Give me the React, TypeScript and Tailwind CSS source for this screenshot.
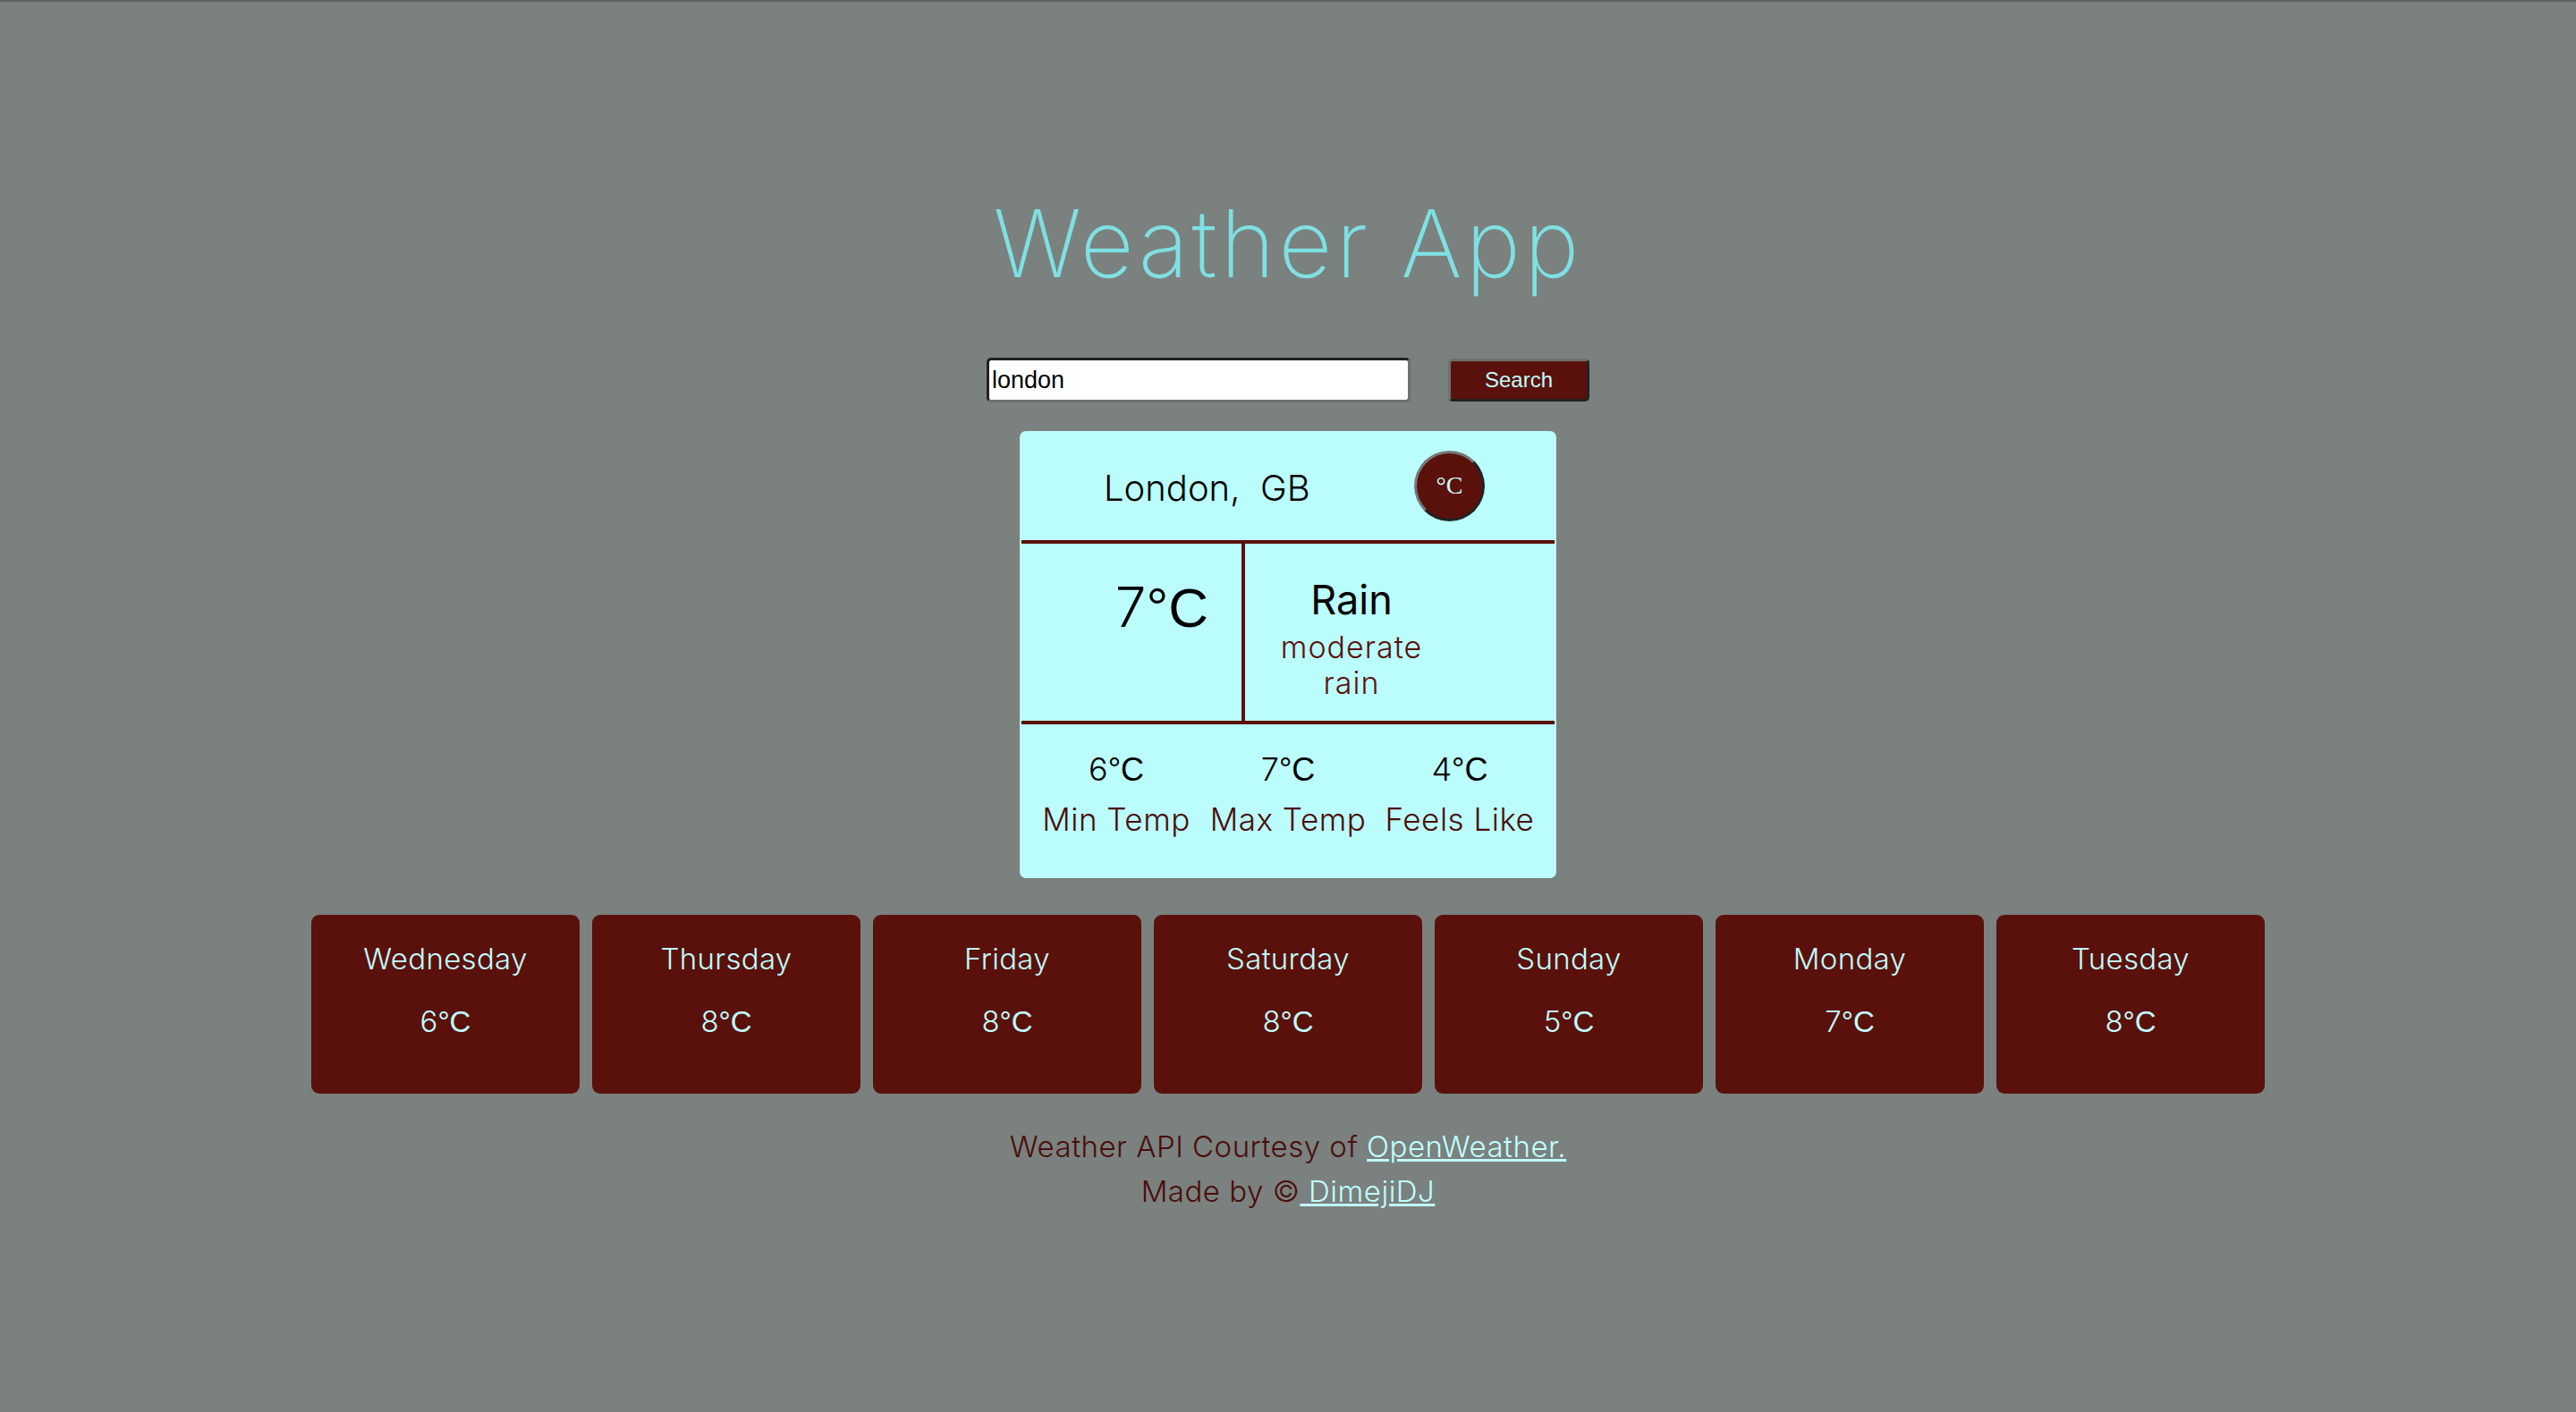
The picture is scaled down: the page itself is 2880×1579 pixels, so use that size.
import React from 'react'

const forecast: [string, number][] = [
  ['Wednesday', 6],
  ['Thursday', 8],
  ['Friday', 8],
  ['Saturday', 8],
  ['Sunday', 5],
  ['Monday', 7],
  ['Tuesday', 8],
]

function Temp({ value }: { value: number }) {
  return (
    <>
      <span>{value}</span>
      <span className="font-['Liberation_Sans',Arial,sans-serif] font-normal">°C</span>
    </>
  )
}

export default function App() {
  return (
    <div className="min-h-screen bg-[#7a817e] border-t-2 border-[#5c605e] font-['Inter','Open_Sans',sans-serif] font-light flex flex-col items-center">
      {/* TITLE */}
      <h1 className="mt-[218px] text-[104px] leading-none tracking-[4px] text-[#7fe0e3] font-extralight">Weather App</h1>

      {/* SEARCH */}
      <div className="mt-[76px] flex items-center gap-[42px]">
        <input
          value="london"
          readOnly
          className="w-[474px] h-[50px] bg-white rounded-[5px] border-[3px] border-t-[#222] border-l-[#222] border-b-[#6f6f6f] border-r-[#6f6f6f] px-[3px] text-[27px] text-black font-['Liberation_Sans',Arial,sans-serif] font-normal outline-none"
        />
        <button className="w-[158px] h-[48px] bg-[#5a110c] rounded-[5px] border-[3px] border-t-[#6f6f6f] border-l-[#6f6f6f] border-b-[#222] border-r-[#222] text-[24px] text-[#c0ffff] font-['Liberation_Sans',Arial,sans-serif] font-normal">
          Search
        </button>
      </div>

      {/* CURRENT WEATHER */}
      <div className="mt-[32px] w-[600px] h-[500px] bg-[#bbfcfc] rounded-[7px] px-[2px] flex flex-col text-black">
        <div className="h-[126px] flex items-center justify-between pl-[92px] pr-[78px] border-b-4 border-[#5a110c]">
          <span className="mt-[6px] text-[40px] font-light whitespace-pre">London,  GB</span>
          <button className="w-[79px] h-[79px] rounded-full bg-[#5a110c] border-[3px] border-t-[#777] border-l-[#777] border-b-[#222] border-r-[#222] text-[28px] text-[#c8ffff] font-['Liberation_Serif',serif] font-normal">
            °C
          </button>
        </div>
        <div className="h-[202px] flex border-b-4 border-[#5a110c]">
          <div className="w-[250px] border-r-4 border-[#5a110c] pl-[68px] pt-[40px] text-center text-[62px] leading-none">
            <Temp value={7} />
          </div>
          <div className="ml-[29px] w-[180px] pt-[36px] text-center">
            <p className="text-[45px] leading-[1.2] font-normal">Rain</p>
            <p className="mt-[6px] text-[34px] leading-[40px] tracking-[1px] text-[#5a110c]">moderate rain</p>
          </div>
        </div>
        <div className="pt-[28px] flex justify-center">
          {[
            [6, 'Min Temp'],
            [7, 'Max Temp'],
            [4, 'Feels Like'],
          ].map(([v, label]) => (
            <div key={label as string} className="w-[192px] flex flex-col items-center whitespace-nowrap">
              <span className="text-[36px] leading-[44px]">
                <Temp value={v as number} />
              </span>
              <span className="mt-[11px] text-[35px] leading-[44px] tracking-[0.5px] text-[#4a0d0a]">{label}</span>
            </div>
          ))}
        </div>
      </div>

      {/* FORECAST */}
      <div className="mt-[41px] flex gap-[14px]">
        {forecast.map(([day, t]) => (
          <div key={day} className="w-[300px] h-[200px] bg-[#5a110c] rounded-[9px] flex flex-col items-center pt-[29px] text-[#c0ffff]">
            <span className="text-[33px] leading-[40px] tracking-[0.3px]">{day}</span>
            <span className="mt-[30px] text-[33px] leading-[40px]">
              <Temp value={t} />
            </span>
          </div>
        ))}
      </div>

      {/* FOOTER */}
      <div className="mt-[34px] text-center text-[33px] leading-[50px] tracking-[0.5px] text-[#4a0d0a]">
        <p>
          Weather API Courtesy of{' '}
          <a href="#" className="text-[#c0ffff] underline">OpenWeather.</a>
        </p>
        <p>
          Made by ©<a href="#" className="text-[#c0ffff] underline"> DimejiDJ</a>
        </p>
      </div>
    </div>
  )
}
